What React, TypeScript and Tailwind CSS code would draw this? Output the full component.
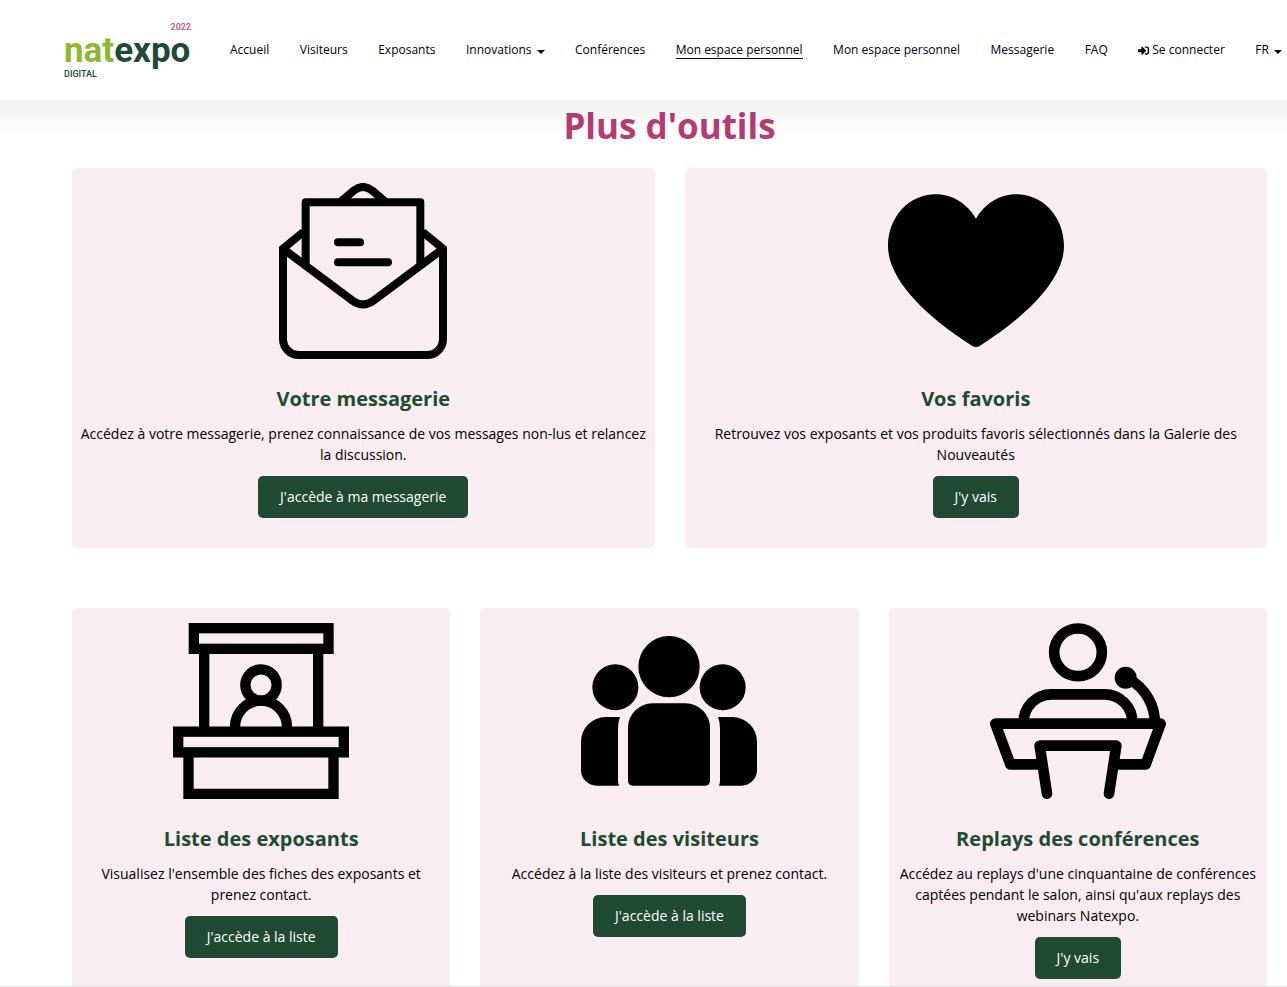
import React from "react";
import { FaSignInAlt } from "react-icons/fa";

const navLinks = [
  { label: "Accueil" },
  { label: "Visiteurs" },
  { label: "Exposants" },
  { label: "Innovations", caret: true },
  { label: "Conférences" },
  { label: "Mon espace personnel", active: true },
  { label: "Mon espace personnel" },
  { label: "Messagerie" },
  { label: "FAQ" },
];

const Caret = () => (
  <svg viewBox="0 0 8 4" className="mt-[3px] h-1 w-2" aria-hidden="true">
    <path d="M0 0H8L4 4Z" />
  </svg>
);

const MailIcon = () => (
  <svg viewBox="45 39 528 528" className="size-44" fill="none" stroke="#000" strokeWidth="24" aria-hidden="true">
    <path d="M130 186L69 236V507a48 48 0 0 0 48 48H501a48 48 0 0 0 48-48V236L488 186" strokeLinejoin="miter" />
    <path d="M70 237L278 392Q309 414 340 392L548 237" />
    <path d="M137 288V97H481V288" strokeLinejoin="round" />
    <path d="M240 97L281 62Q309 40 337 62L378 97" />
    <path d="M234 217H300M234 277H384" strokeLinecap="round" />
  </svg>
);

const HeartIcon = () => (
  <svg viewBox="54 39 528 528" className="size-44" aria-hidden="true">
    <path d="M318 146C292 102 249 73 197 73C118 73 54 140 54 228C54 320 150 428 306 527Q318 535 330 527C486 428 582 320 582 228C582 140 518 73 439 73C387 73 344 102 318 146Z" />
  </svg>
);

const BoothIcon = () => (
  <svg viewBox="39 39 528 528" className="size-44" fill="none" stroke="#000" strokeWidth="31" aria-hidden="true">
    <rect x="101.500" y="54.500" width="404" height="62" />
    <path d="M132.500 120V360M474.500 120V360" />
    <rect x="54.500" y="365" width="497" height="62" />
    <path d="M85.500 427V551.500H520.500V427" />
    <circle cx="303" cy="225" r="47" />
    <path d="M225 352a78 80 0 0 1 156 0" />
  </svg>
);

const PeopleIcon = () => (
  <svg viewBox="33 9 528 528" className="size-44" aria-hidden="true">
    <circle cx="297" cy="140" r="92" />
    <circle cx="136" cy="202" r="69" />
    <circle cx="458" cy="202" r="69" />
    <path d="M247 250H347A73 73 0 0 1 420 323V483a14 14 0 0 1-14 14H188a14 14 0 0 1-14-14V323A73 73 0 0 1 247 250Z" />
    <path d="M150 291H107A74 74 0 0 0 33 365V450A47 47 0 0 0 80 497H147Q144 490 144 482V325Q144 305 150 291Z" />
    <path d="M444 291H487A74 74 0 0 1 561 365V450A47 47 0 0 1 514 497H447Q450 490 450 482V325Q450 305 444 291Z" />
  </svg>
);

const SpeakerIcon = () => (
  <svg
    viewBox="30 39 528 528"
    className="size-44"
    fill="none"
    stroke="#000"
    strokeWidth="32"
    strokeLinejoin="round"
    aria-hidden="true"
  >
    <circle cx="294" cy="127" r="71.500" />
    <path d="M131 337C131 290 168 253 214 253H374C420 253 457 290 457 337" />
    <path d="M185 463H91L46 341H542L497 463H405" />
    <path d="M201 551L179 407H409L387 551" strokeLinecap="round" />
    <circle cx="437" cy="203" r="33" fill="#000" stroke="none" />
    <path d="M445 206C500 236 525 290 525 341" />
  </svg>
);

const mainTools = [
  {
    title: "Votre messagerie",
    text: "Accédez à votre messagerie, prenez connaissance de vos messages non-lus et relancez la discussion.",
    button: "J'accède à ma messagerie",
    icon: <MailIcon />,
  },
  {
    title: "Vos favoris",
    text: "Retrouvez vos exposants et vos produits favoris sélectionnés dans la Galerie des Nouveautés",
    button: "J'y vais",
    icon: <HeartIcon />,
  },
];

const otherTools = [
  {
    title: "Liste des exposants",
    text: "Visualisez l'ensemble des fiches des exposants et prenez contact.",
    button: "J'accède à la liste",
    icon: <BoothIcon />,
  },
  {
    title: "Liste des visiteurs",
    text: "Accédez à la liste des visiteurs et prenez contact.",
    button: "J'accède à la liste",
    icon: <PeopleIcon />,
  },
  {
    title: "Replays des conférences",
    text: "Accédez au replays d'une cinquantaine de conférences captées pendant le salon, ainsi qu'aux replays des webinars Natexpo.",
    button: "J'y vais",
    icon: <SpeakerIcon />,
  },
];

type Tool = (typeof mainTools)[number];

const ToolCard = ({ tool }: { tool: Tool }) => (
  <article className="flex flex-col items-center rounded-[5px] bg-[#faedf1] px-2 pt-[15px] pb-[30px] text-center">
    {tool.icon}
    <h2 className="mt-6 text-[20px] leading-8 font-bold text-[#214b33]">{tool.title}</h2>
    <p className="mt-2 mb-[11px] text-[14px] leading-[21px]">{tool.text}</p>
    <button className="h-[42px] rounded-[5px] bg-[#204a33] px-[22px] pb-[2px] text-[14px] text-white">
      {tool.button}
    </button>
  </article>
);

const Logo = () => (
  <a
    href="#"
    aria-label="Natexpo Digital 2022"
    className="flex h-[60px] w-[127px] shrink-0 flex-col font-['Roboto',sans-serif] text-[#204a33]"
  >
    <span className="self-end text-[9px] leading-[14px] font-medium text-[#cf4585]">2022</span>
    <span className="text-[35px] leading-[34px] font-bold">
      <span className="text-[#8fb832]">nat</span>expo
    </span>
    <span className="text-[9px] leading-3 font-medium">DIGITAL</span>
  </a>
);

const App = () => {
  return (
    <div className="flex h-screen flex-col overflow-hidden border-b border-[#dee2e6] bg-white font-['Open_Sans',sans-serif] text-black">
      <header className="relative z-10 flex h-[100px] shrink-0 items-center bg-white pr-[5px] pl-16 after:pointer-events-none after:absolute after:inset-x-0 after:top-full after:h-9 after:bg-linear-to-b after:from-black/6 after:to-transparent">
        <Logo />
        <nav className="ml-[39px] flex flex-1 items-center justify-between text-[12px] leading-4 whitespace-nowrap">
          {navLinks.map((link, i) => (
            <a
              key={i}
              href="#"
              className={link.active ? "border-y border-t-transparent border-b-black" : "flex items-center gap-[5px]"}
            >
              {link.label}
              {link.caret && <Caret />}
            </a>
          ))}
          <a href="#" className="flex items-center gap-[3px]">
            <FaSignInAlt size={11} />
            Se connecter
          </a>
          <a href="#" className="flex items-center gap-[5px]">
            FR
            <Caret />
          </a>
        </nav>
      </header>

      <main className="flex-1 overflow-y-auto pr-5 pl-[72px] [scrollbar-width:none]">
        <h1 className="pt-[2px] pb-[18px] text-center text-[35px] leading-[48px] font-bold text-[#b83b75]">
          Plus d'outils
        </h1>
        <section className="grid grid-cols-2 gap-[30px]">
          {mainTools.map((tool) => (
            <ToolCard key={tool.title} tool={tool} />
          ))}
        </section>
        <section className="mt-[60px] grid grid-cols-3 gap-[30px] pb-[60px]">
          {otherTools.map((tool) => (
            <ToolCard key={tool.title} tool={tool} />
          ))}
        </section>
      </main>
    </div>
  );
};

export default App;
